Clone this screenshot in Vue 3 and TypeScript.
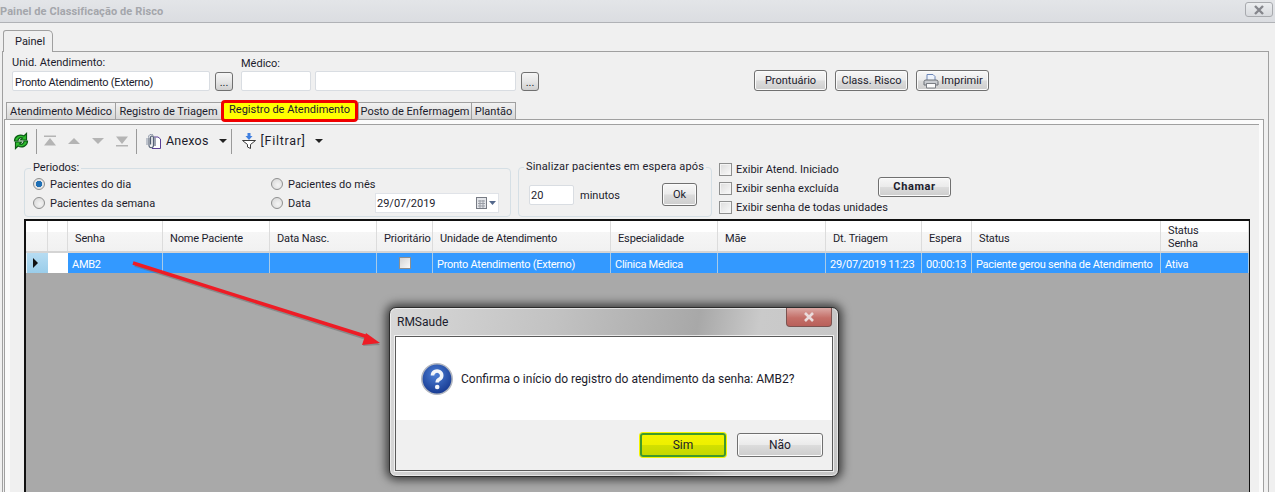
<script setup lang="ts">
interface Column {
  title: string
  width: number
  value: string
}

const columns: Column[] = [
  { title: 'Senha', width: 95, value: 'AMB2' },
  { title: 'Nome Paciente', width: 107, value: '' },
  { title: 'Data Nasc.', width: 107, value: '' },
  { title: 'Prioritário', width: 56, value: '' },
  { title: 'Unidade de Atendimento', width: 178, value: 'Pronto Atendimento (Externo)' },
  { title: 'Especialidade', width: 107, value: 'Clínica Médica' },
  { title: 'Mãe', width: 108, value: '' },
  { title: 'Dt. Triagem', width: 96, value: '29/07/2019 11:23' },
  { title: 'Espera', width: 50, value: '00:00:13' },
  { title: 'Status', width: 189, value: 'Paciente gerou senha de Atendimento' },
  { title: 'Status Senha', width: 88, value: 'Ativa' },
]

const gridTemplate = `22px 20px ${columns.map((c) => c.width + 'px').join(' ')}`

const innerTabs = [
  { label: 'Atendimento Médico', width: 110 },
  { label: 'Registro de Triagem', width: 107 },
  { label: 'Registro de Atendimento', width: 137, active: true },
  { label: 'Posto de Enfermagem', width: 114 },
  { label: 'Plantão', width: 45 },
]

const checks = ['Exibir Atend. Iniciado', 'Exibir senha excluída', 'Exibir senha de todas unidades']
</script>

<template>
  <div class="app">
    <div class="titlebar">
      <span class="title-text">Painel de Classificação de Risco</span>
      <button class="win-close">
        <svg viewBox="0 0 12 10" width="12" height="10">
          <path d="M2 1 L10 9 M10 1 L2 9" stroke="#85868c" stroke-width="2.4" fill="none" />
        </svg>
      </button>
    </div>

    <div class="outer-tabs">
      <div class="outer-tab">Painel</div>
    </div>

    <div class="outer-panel">
      <div class="head-row">
        <div class="field">
          <label>Unid. Atendimento:</label>
          <div class="field-row">
            <input class="text-input unit-input" readonly value="Pronto Atendimento (Externo)" />
            <button class="dots-btn">...</button>
          </div>
        </div>
        <div class="field field-medico">
          <label>Médico:</label>
          <div class="field-row">
            <input class="text-input code-input" readonly />
            <input class="text-input name-input" readonly />
            <button class="dots-btn">...</button>
          </div>
        </div>
        <div class="head-actions">
          <button class="btn head-btn">Prontuário</button>
          <button class="btn head-btn">Class. Risco</button>
          <button class="btn head-btn print-btn">
            <svg viewBox="0 0 18 16" width="18" height="16">
              <path d="M5 7 V1.5 H11 L13 3.5 V7" fill="#eef3fb" stroke="#6c86b8" />
              <path d="M2 12 V8.5 Q2 7 4 7 H14 Q16 7 16 8.5 V12 H13.5 V10.5 H4.5 V12 Z" fill="#c9ccd1" stroke="#6d7076" />
              <path d="M4.5 10.5 H13.5 V15 H4.5 Z" fill="#fafafa" stroke="#7b7e84" />
            </svg>
            <span>Imprimir</span>
          </button>
        </div>
      </div>

      <div class="inner-tabs">
        <div
          v-for="tab in innerTabs"
          :key="tab.label"
          class="inner-tab"
          :class="{ 'inner-tab--marked': tab.active }"
          :style="{ width: tab.width + 'px' }"
        >
          {{ tab.label }}
        </div>
      </div>

      <div class="inner-panel">
        <div class="content">
          <div class="toolbar">
            <svg class="ico-refresh" viewBox="0 0 16 18" width="16" height="18">
              <g fill="#2fbf2f" stroke="#0b5c14" stroke-width="1.2">
                <path d="M1.5 9 C1.5 4.5 6.5 1.5 11 4 L13.5 1.5 V8 H7.5 L9.5 6 C7 5 5 6.5 5 9 Z" />
                <path d="M14.5 9 C14.5 13.5 9.5 16.5 5 14 L2.5 16.5 V10 H8.5 L6.5 12 C9 13 11 11.5 11 9 Z" />
              </g>
            </svg>
            <span class="tb-sep sep-a"></span>
            <svg class="nav-ico" viewBox="0 0 12 12" width="12" height="12">
              <path d="M0 0.5 H12 V2 H0 Z M6 3 L12 10.5 H0 Z" fill="#b4b4b4" />
            </svg>
            <svg class="nav-ico" viewBox="0 0 12 12" width="12" height="12">
              <path d="M6 3 L12 9 H0 Z" fill="#b4b4b4" />
            </svg>
            <svg class="nav-ico" viewBox="0 0 12 12" width="12" height="12">
              <path d="M0 3 H12 L6 9 Z" fill="#b4b4b4" />
            </svg>
            <svg class="nav-ico nav-ico--last" viewBox="0 0 12 12" width="12" height="12">
              <path d="M0 1.5 H12 L6 9 Z M0 10 H12 V11.5 H0 Z" fill="#b4b4b4" />
            </svg>
            <span class="tb-sep sep-b"></span>
            <svg class="ico-clip" viewBox="0 0 15 15" width="15" height="15">
              <path d="M8 3 H12 L14.5 5 V14.5 H6" fill="#fff" stroke="#5a3f96" />
              <path d="M3 4 V11.5 A2.2 2.2 0 0 0 7.4 11.5 V3 A1.5 1.5 0 0 0 4.6 3 V10.5 M9 3.5 V12" fill="none" stroke="#4d5a70" stroke-width="1.1" />
              <path d="M1 4 V11 M7.4 1.5 A2.5 2.5 0 0 0 3 4" fill="none" stroke="#8a94a6" />
            </svg>
            <span class="tb-text">Anexos</span>
            <span class="caret caret-a"></span>
            <span class="tb-sep sep-c"></span>
            <svg class="ico-filter" viewBox="0 0 14 16" width="14" height="16">
              <path d="M5.5 0 H8.5 V3 H10.5 L7 7 L3.5 3 H5.5 Z" fill="#3f7fe0" />
              <path d="M0.5 7.5 H13.5 L8.5 11.5 V15.5 L5.5 14 V11.5 Z" fill="#fff" stroke="#3a3a3a" />
            </svg>
            <span class="tb-text tb-filter">[Filtrar]</span>
            <span class="caret caret-b"></span>
          </div>

          <div class="filters">
            <fieldset class="group group-periodos">
              <legend>Periodos:</legend>
              <div class="periodos-grid">
                <label class="opt"><span class="radio radio--on"></span><span class="opt-text">Pacientes do dia</span></label>
                <label class="opt opt-wide"><span class="radio"></span><span class="opt-text">Pacientes do mês</span></label>
                <label class="opt"><span class="radio"></span><span class="opt-text">Pacientes da semana</span></label>
                <label class="opt"><span class="radio"></span><span class="opt-text">Data</span></label>
                <div class="date-input">
                  <span class="opt-text">29/07/2019</span>
                  <svg viewBox="0 0 20 12" width="20" height="12">
                    <rect x="0.5" y="0.5" width="10" height="11" fill="#e4e6ea" stroke="#777b84" />
                    <path d="M2 4 H9 M2 6.5 H9 M2 9 H9 M4 3 V11 M7 3 V11" stroke="#9a9ea6" />
                    <path d="M13 4 H20 L16.5 8 Z" fill="#54688c" />
                  </svg>
                </div>
              </div>
            </fieldset>

            <fieldset class="group group-alert">
              <legend>Sinalizar pacientes em espera após</legend>
              <div class="alert-row">
                <input class="text-input wait-input" readonly value="20" />
                <span class="minutes opt-text">minutos</span>
                <button class="btn ok-btn">Ok</button>
              </div>
            </fieldset>

            <div class="checks">
              <label v-for="item in checks" :key="item" class="opt">
                <span class="check"></span><span class="opt-text">{{ item }}</span>
              </label>
            </div>

            <button class="btn call-btn">Chamar</button>
          </div>

          <div class="grid">
            <div class="grid-head" :style="{ gridTemplateColumns: gridTemplate }">
              <div class="hcell"></div>
              <div class="hcell"></div>
              <div v-for="col in columns" :key="col.title" class="hcell">
                <span :class="{ 'hcell-wrap': col.title === 'Status Senha' }">{{ col.title }}</span>
              </div>
            </div>
            <div class="grid-row" :style="{ gridTemplateColumns: gridTemplate }">
              <div class="row-head"><span class="row-arrow"></span></div>
              <div class="row-check"></div>
              <div v-for="col in columns" :key="col.title" class="cell">
                <span v-if="col.title === 'Prioritário'" class="cell-check"></span>
                <template v-else>{{ col.value }}</template>
              </div>
            </div>
          </div>
        </div>
      </div>
    </div>

    <!-- annotation drawn over the screenshot -->
    <svg class="arrow" viewBox="0 0 1275 492" width="1275" height="492">
      <path d="M134 263 L368 337" stroke="#6a6a6a" stroke-opacity="0.5" stroke-width="3.5" transform="translate(1 2)" />
      <path d="M380 345 L366 334 L363 346 Z" fill="#6a6a6a" fill-opacity="0.5" />
      <path d="M133 263 L368 337" stroke="#ee1c25" stroke-width="3.5" />
      <path d="M380 343 L366 333 L362 345 Z" fill="#ee1c25" />
    </svg>

    <div class="dialog">
      <div class="dialog-title">
        <span>RMSaude</span>
        <div class="dialog-close">
          <svg viewBox="0 0 12 10" width="12" height="10">
            <path d="M2 1 L10 9 M10 1 L2 9" stroke="#eadcdc" stroke-width="2.6" fill="none" />
          </svg>
        </div>
      </div>
      <div class="dialog-body">
        <div class="dialog-msg">
          <svg viewBox="0 0 32 32" width="32" height="32">
            <defs>
              <radialGradient id="qBlue" cx="0.45" cy="0.35" r="0.75">
                <stop offset="0" stop-color="#4c7fd6" />
                <stop offset="1" stop-color="#0f2f86" />
              </radialGradient>
            </defs>
            <circle cx="16" cy="16" r="15.2" fill="url(#qBlue)" stroke="#b4b8c0" stroke-width="1.6" />
            <path d="M11.5 12.5 A4.6 4.4 0 1 1 18.5 16.2 Q16.2 17.4 16.2 19.5" fill="none" stroke="#f2f5fa" stroke-width="3.6" />
            <circle cx="16.2" cy="24" r="2.3" fill="#f2f5fa" />
          </svg>
          <span>Confirma o início do registro do atendimento da senha: AMB2?</span>
        </div>
        <div class="dialog-foot">
          <button class="btn dlg-btn dlg-btn--yes">Sim</button>
          <button class="btn dlg-btn">Não</button>
        </div>
      </div>
    </div>
  </div>
</template>

<style scoped>
.app {
  position: relative;
  width: 1275px;
  height: 492px;
  overflow: hidden;
  display: flex;
  flex-direction: column;
  background: #f0f0f0;
  color: #1c1c2c;
  font-family: Roboto, "Liberation Sans", sans-serif;
  font-size: 11px;
  line-height: 14px;
}

button {
  font: inherit;
  color: inherit;
  padding: 0;
}

/* Title bar */
.titlebar {
  flex: none;
  height: 22px;
  display: flex;
  align-items: center;
  justify-content: space-between;
  background: linear-gradient(#e3e5e8, #dbdde1);
  border-bottom: 1px solid #b0b2b6;
}

.title-text {
  padding-top: 2px;
  font-weight: 700;
  color: #a4a6ab;
  letter-spacing: 0.1px;
}

.win-close {
  width: 28px;
  height: 15px;
  margin: -3px 2px 0 0;
  display: flex;
  align-items: center;
  justify-content: center;
  background: linear-gradient(#eceef0, #d8dade);
  border: 1px solid #a8aaae;
  border-radius: 3px;
}

/* Outer tab */
.outer-tabs {
  flex: none;
  height: 21px;
  margin-top: 7px;
  padding-left: 3px;
  position: relative;
  z-index: 1;
}

.outer-tab {
  width: 50px;
  height: 22px;
  padding: 4px 0 0 11px;
  box-sizing: border-box;
  background: #f0f0f0;
  border: 1px solid #a0a0a0;
  border-bottom: none;
  border-radius: 3px 5px 0 0;
}

.outer-panel {
  flex: 1;
  min-height: 0;
  margin: 0 6px 0 2px;
  display: flex;
  flex-direction: column;
  border: 1px solid #a0a0a0;
  border-bottom: none;
}

/* Header fields */
.head-row {
  flex: none;
  height: 47px;
  padding: 3px 0 0 9px;
  display: flex;
}

.field {
  display: flex;
  flex-direction: column;
  gap: 1px;
}

.field label {
  padding-top: 1px;
}

.field-medico {
  margin-left: 8px;
}

.field-medico label {
  position: relative;
  top: 1px;
}

.field-row {
  display: flex;
  align-items: center;
  gap: 5px;
}

.text-input {
  box-sizing: border-box;
  height: 20px;
  padding: 2px 2px 0;
  font: inherit;
  color: inherit;
  letter-spacing: -0.27px;
  background: #fff;
  border: 1px solid #d9dde2;
  border-radius: 2px;
  outline: none;
}

.unit-input {
  width: 198px;
}

.code-input {
  width: 70px;
  margin-right: -1px;
}

.name-input {
  width: 201px;
}

.dots-btn {
  width: 18px;
  height: 19px;
  line-height: 20px;
  background: linear-gradient(#f6f6f6, #e6e6e6 50%, #cfcfcf);
  border: 1px solid #707070;
  border-radius: 3px;
}

.head-actions {
  margin: 15px 0 0 215px;
  display: flex;
  gap: 8px;
}

.btn {
  background: linear-gradient(#f7f7f7, #ebebeb 48%, #dcdcdc 52%, #cdcdcd);
  border: 1px solid #707070;
  border-radius: 3px;
  box-shadow: inset 0 0 0 1px #fbfbfb;
}

.head-btn {
  width: 73px;
  height: 21px;
}

.print-btn {
  display: flex;
  align-items: center;
  justify-content: center;
  gap: 1px;
}

/* Inner tabs */
.inner-tabs {
  flex: none;
  height: 17px;
  padding-left: 3px;
  display: flex;
}

.inner-tab {
  box-sizing: border-box;
  height: 17px;
  text-align: center;
  line-height: 18px;
  white-space: nowrap;
  background: linear-gradient(#f2f2f2, #e4e4e4 50%, #d6d6d6);
  border: 1px solid #a0a0a0;
  border-bottom: none;
  margin-right: -1px;
}

.inner-tab--marked {
  height: 22px;
  margin: -2px 0 -3px 0;
  position: relative;
  z-index: 2;
  padding-top: 0;
  background: #ffff00;
  border: 3px solid #f00000;
  border-radius: 4px;
  line-height: 14px;
}

.inner-panel {
  flex: 1;
  min-height: 0;
  margin: 0 4px 0 1px;
  padding: 4px 4px 0 5px;
  display: flex;
  background: #fbfbfb;
  border: 1px solid #a0a0a0;
  border-bottom: none;
}

.content {
  flex: 1;
  min-width: 0;
  display: flex;
  flex-direction: column;
  background: #f0f0f0;
  border-top: 1px solid #a0a0a0;
}

/* Toolbar */
.toolbar {
  flex: none;
  height: 30px;
  padding: 2px 0 0 3px;
  box-sizing: border-box;
  display: flex;
  align-items: center;
  font-size: 12.5px;
}

.tb-sep {
  width: 1px;
  height: 25px;
  background: #9a9a9a;
}

.sep-a {
  margin: 0 7px;
}

.sep-b {
  margin-left: 8px;
}

.sep-c {
  margin-left: 4px;
}

.nav-ico {
  margin-right: 12px;
}

.nav-ico--last {
  margin-right: 0;
}

.ico-clip {
  margin-left: 9px;
}

.tb-text {
  margin-left: 5px;
  letter-spacing: 0.2px;
}

.tb-filter {
  letter-spacing: 0.7px;
}

.caret {
  width: 0;
  height: 0;
  border-left: 4px solid transparent;
  border-right: 4px solid transparent;
  border-top: 4px solid #222;
}

.caret-a {
  margin-left: 10px;
}

.caret-b {
  margin-left: 9px;
}

.ico-filter {
  margin-left: 10px;
}

/* Filters */
.filters {
  flex: none;
  height: 64px;
  margin-left: 14px;
  padding-bottom: 2px;
  box-sizing: border-box;
  display: flex;
  align-items: flex-end;
}

.group {
  margin: 0;
  box-sizing: border-box;
  min-width: 0;
  border: 1px solid #d5dfe5;
  border-radius: 4px;
}

.group legend {
  padding: 0 2px;
  margin-left: -2px;
}

.group-periodos {
  width: 487px;
  height: 56px;
  padding: 0 0 0 8px;
}

.periodos-grid {
  margin-top: -1px;
  display: grid;
  grid-template-columns: 238px 104px 124px;
  grid-auto-rows: 19px;
}

.opt-wide {
  grid-column: span 2;
}

.opt {
  display: flex;
  align-items: center;
  white-space: nowrap;
}

.opt-text {
  padding-top: 2px;
}

.radio {
  flex: none;
  box-sizing: border-box;
  width: 12px;
  height: 12px;
  margin-right: 5px;
  border: 1px solid #8e8f8f;
  border-radius: 50%;
  background: radial-gradient(circle at 60% 60%, #f4f4f4, #d4d4d4);
}

.radio--on {
  background: radial-gradient(circle, #1f6fb5 0 3px, #e4e4e4 3.5px);
}

.date-input {
  box-sizing: border-box;
  width: 124px;
  height: 20px;
  padding: 0 0 0 1px;
  display: flex;
  align-items: center;
  justify-content: space-between;
  background: #fff;
  border: 1px solid #e0e3e8;
}

.date-input svg {
  margin-right: 2px;
}

.group-alert {
  width: 194px;
  height: 57px;
  margin-left: 7px;
  padding: 0 0 0 10px;
}

.group-alert legend {
  margin-left: -5px;
  letter-spacing: 0.15px;
}

.alert-row {
  margin-top: 9px;
  display: flex;
  align-items: center;
}

.wait-input {
  width: 45px;
  padding-left: 1px;
  letter-spacing: 0;
}

.minutes {
  margin-left: 6px;
}

.ok-btn {
  width: 35px;
  height: 23px;
  margin-left: auto;
  margin-right: 14px;
}

.checks {
  width: 159px;
  margin: 0 0 3px 7px;
  display: flex;
  flex-direction: column;
  gap: 5px;
}

.check {
  flex: none;
  box-sizing: border-box;
  width: 13px;
  height: 13px;
  margin-right: 4px;
  background: linear-gradient(135deg, #dcdcdc, #fafafa);
  border: 1px solid #8e8f8f;
  box-shadow: inset 0 0 0 1px #f4f4f4;
}

.checks .opt {
  height: 14px;
}

.call-btn {
  width: 73px;
  height: 20px;
  margin-bottom: 20px;
  font-weight: 700;
  letter-spacing: 0.6px;
}

/* Data grid */
.grid {
  flex: 1;
  min-height: 0;
  margin-left: 14px;
  width: 1226px;
  box-sizing: border-box;
  background: #a9a9a9;
  border: 2px solid #111;
  border-right-width: 1px;
  border-bottom: none;
}

.grid-head {
  display: grid;
  height: 32px;
  background: linear-gradient(#ffffff, #ffffff 35%, #f6f6f6 36%, #f1f1f1);
  border-bottom: 2px solid #d4d4d4;
  box-sizing: border-box;
}

.hcell {
  display: flex;
  align-items: center;
  padding: 5px 0 0 7px;
  letter-spacing: -0.15px;
  border-right: 1px solid #dcdcdc;
  box-sizing: border-box;
  min-width: 0;
}

.hcell-wrap {
  width: 50px;
  line-height: 13px;
  margin-top: -4px;
}

.grid-row {
  display: grid;
  height: 20px;
  background: #3399ff;
}

.row-head {
  display: flex;
  align-items: center;
  padding-left: 6px;
  background: linear-gradient(#b6dcf2, #9acdea);
  border-left: 1px solid #eaf4fa;
}

.row-arrow {
  width: 0;
  height: 0;
  border-top: 5px solid transparent;
  border-bottom: 5px solid transparent;
  border-left: 5px solid #111;
}

.row-check {
  background: #fff;
}

.cell {
  display: flex;
  align-items: center;
  padding: 3px 0 0 4px;
  color: #fff;
  letter-spacing: -0.27px;
  white-space: nowrap;
  overflow: hidden;
  box-sizing: border-box;
  border-right: 1px solid #a8cbe8;
}

.cell-check {
  box-sizing: border-box;
  width: 12px;
  height: 12px;
  margin: -3px 0 0 18px;
  background: linear-gradient(135deg, #d4d4d4, #fafafa);
  border: 1px solid #8e8f8f;
}

/* Annotation arrow */
.arrow {
  position: absolute;
  left: 0;
  top: 0;
  pointer-events: none;
}

/* Message box */
.dialog {
  position: absolute;
  left: 389px;
  top: 307px;
  width: 450px;
  height: 170px;
  box-sizing: border-box;
  display: flex;
  flex-direction: column;
  background-color: #cfcfcf;
  background-image: linear-gradient(100deg, #d8d8d8, #c2c2c2 35%, #a8a8a8 65%, #cacaca 78%, #c6c6c6);
  border: 1px solid #2c2c2c;
  border-radius: 7px;
  box-shadow: 0 0 10px 3px rgba(0, 0, 0, 0.65), inset 0 0 0 1px rgba(255, 255, 255, 0.55);
}

.dialog-title {
  flex: none;
  height: 28px;
  padding-left: 7px;
  display: flex;
  justify-content: space-between;
  align-items: flex-start;
  font-size: 12px;
}

.dialog-title > span {
  margin-top: 7px;
}

.dialog-close {
  width: 46px;
  height: 19px;
  margin-right: 6px;
  display: flex;
  align-items: center;
  justify-content: center;
  background: linear-gradient(#dba9a5, #c46f68 55%, #b9605a);
  border: 1px solid #7c5350;
  border-top: none;
  border-radius: 0 0 4px 4px;
  box-sizing: border-box;
}

.dialog-body {
  flex: 1;
  margin: 0 5px 5px;
  display: flex;
  flex-direction: column;
  background: #fff;
  border: 1px solid #5a5a5a;
  box-shadow: 0 0 0 1px rgba(255, 255, 255, 0.7);
}

.dialog-msg {
  flex: 1;
  padding: 0 0 0 25px;
  display: flex;
  align-items: center;
  gap: 8px;
  font-size: 12px;
}

.dialog-foot {
  flex: none;
  height: 50px;
  padding: 13px 9px 0 0;
  box-sizing: border-box;
  display: flex;
  justify-content: flex-end;
  gap: 11px;
  background: #f0f0f0;
}

.dlg-btn {
  width: 86px;
  height: 24px;
  font-size: 12px;
}

.dlg-btn--yes {
  background: linear-gradient(#f3f300, #eef000 48%, #d2e000 52%, #c6d800);
  border: 2px solid #3f9a2a;
  box-shadow: 0 0 0 1px #f4f400;
}
</style>
